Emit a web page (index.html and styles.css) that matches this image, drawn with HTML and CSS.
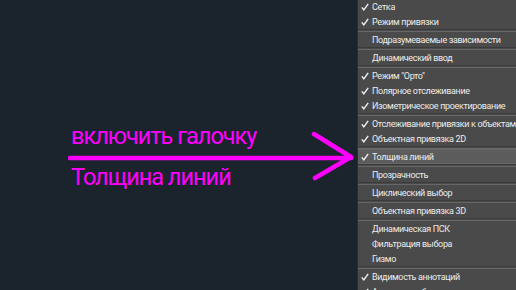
FILE: index.html
```html
<!DOCTYPE html>
<html lang="ru">
<head>
  <meta charset="UTF-8" />
  <title>Толщина линий</title>
  <link rel="stylesheet" href="styles.css">
</head>
<body>
  <main class="canvas">
    <div class="note">
      <p class="note-line">включить галочку</p>
      <p class="note-line note-line--second">Толщина линий</p>
    </div>
    <svg class="arrow" width="290" height="60" viewBox="0 0 290 60">
      <path d="M2 33 H283 M246 9 L283 32 L247 53" fill="none" stroke="#f0f" stroke-width="4.5" stroke-linecap="round" stroke-linejoin="round"/>
    </svg>
  </main>

  <aside class="menu">
    <ul class="menu-list" id="menuList"></ul>
  </aside>

  <script>
    // null = separator, [checked, label, active]
    const items = [
      [true, 'Сетка'],
      [true, 'Режим привязки'],
      null,
      [false, 'Подразумеваемые зависимости'],
      null,
      [false, 'Динамический ввод'],
      null,
      [true, 'Режим "Орто"'],
      [true, 'Полярное отслеживание'],
      [true, 'Изометрическое проектирование'],
      null,
      [true, 'Отслеживание привязки к объектам'],
      [true, 'Объектная привязка 2D'],
      null,
      [true, 'Толщина линий', true],
      null,
      [false, 'Прозрачность'],
      null,
      [false, 'Циклический выбор'],
      null,
      [false, 'Объектная привязка 3D'],
      null,
      [false, 'Динамическая ПСК'],
      [false, 'Фильтрация выбора'],
      [false, 'Гизмо'],
      null,
      [true, 'Видимость аннотаций'],
      [true, 'Автомасштаб']
    ];
    const list = document.getElementById('menuList');
    const check = '<svg class="check" width="8" height="8" viewBox="0 0 8 8"><path d="M0.8 4.4 L2.8 6.8 L7.2 0.8" fill="none" stroke="#f2f2f2" stroke-width="1.4"/></svg>';

    items.forEach(item => {
      const li = document.createElement('li');
      if (!item) {
        li.className = 'sep';
      } else {
        li.className = 'item' + (item[2] ? ' active' : '');
        li.innerHTML = '<span class="mark">' + (item[0] ? check : '') + '</span><span class="label"></span>';
        li.querySelector('.label').textContent = item[1];
      }
      list.appendChild(li);
    });
  </script>
</body>
</html>
```

FILE: styles.css
```css
:root {
  --bg: #1b242d;
  --menu-bg: #4a4a4a;
  --menu-text: #ececec;
  --accent: #ff00ff;
}

* {
  box-sizing: border-box;
  margin: 0;
  padding: 0;
}

body {
  width: 516px;
  height: 290px;
  overflow: hidden;
  background: var(--bg);
  display: flex;
  font-family: Roboto, "Noto Sans", sans-serif;
}

/* Left: annotation */
.canvas {
  flex: 1;
  position: relative;
}
.note {
  padding: 122px 0 0 71px;
  display: flex;
  flex-direction: column;
  gap: 13px;
}
.note-line {
  color: var(--accent);
  font-size: 23.5px;
  line-height: 28px;
  letter-spacing: -1px;
}
.arrow {
  position: absolute;
  left: 68px;
  top: 125px;
}

/* Right: status bar menu */
.menu {
  width: 159px;
  background: var(--menu-bg);
  border-left: 1px solid #2c2c2c;
  overflow: hidden;
}
.menu-list {
  list-style: none;
  margin-top: -1px;
}
.item {
  height: 15px;
  display: flex;
  align-items: center;
  color: var(--menu-text);
  font-size: 9px;
  letter-spacing: -0.35px;
  white-space: nowrap;
}
.item.active {
  background: #5c5c5c;
  box-shadow: inset 0 1px 0 #666, inset 0 -1px 0 #666;
}
.mark {
  width: 14px;
  display: flex;
  justify-content: center;
  flex-shrink: 0;
}
.sep {
  height: 3px;
  border-top: 1px solid #3b3b3b;
  border-bottom: 1px solid #676767;
}
```
